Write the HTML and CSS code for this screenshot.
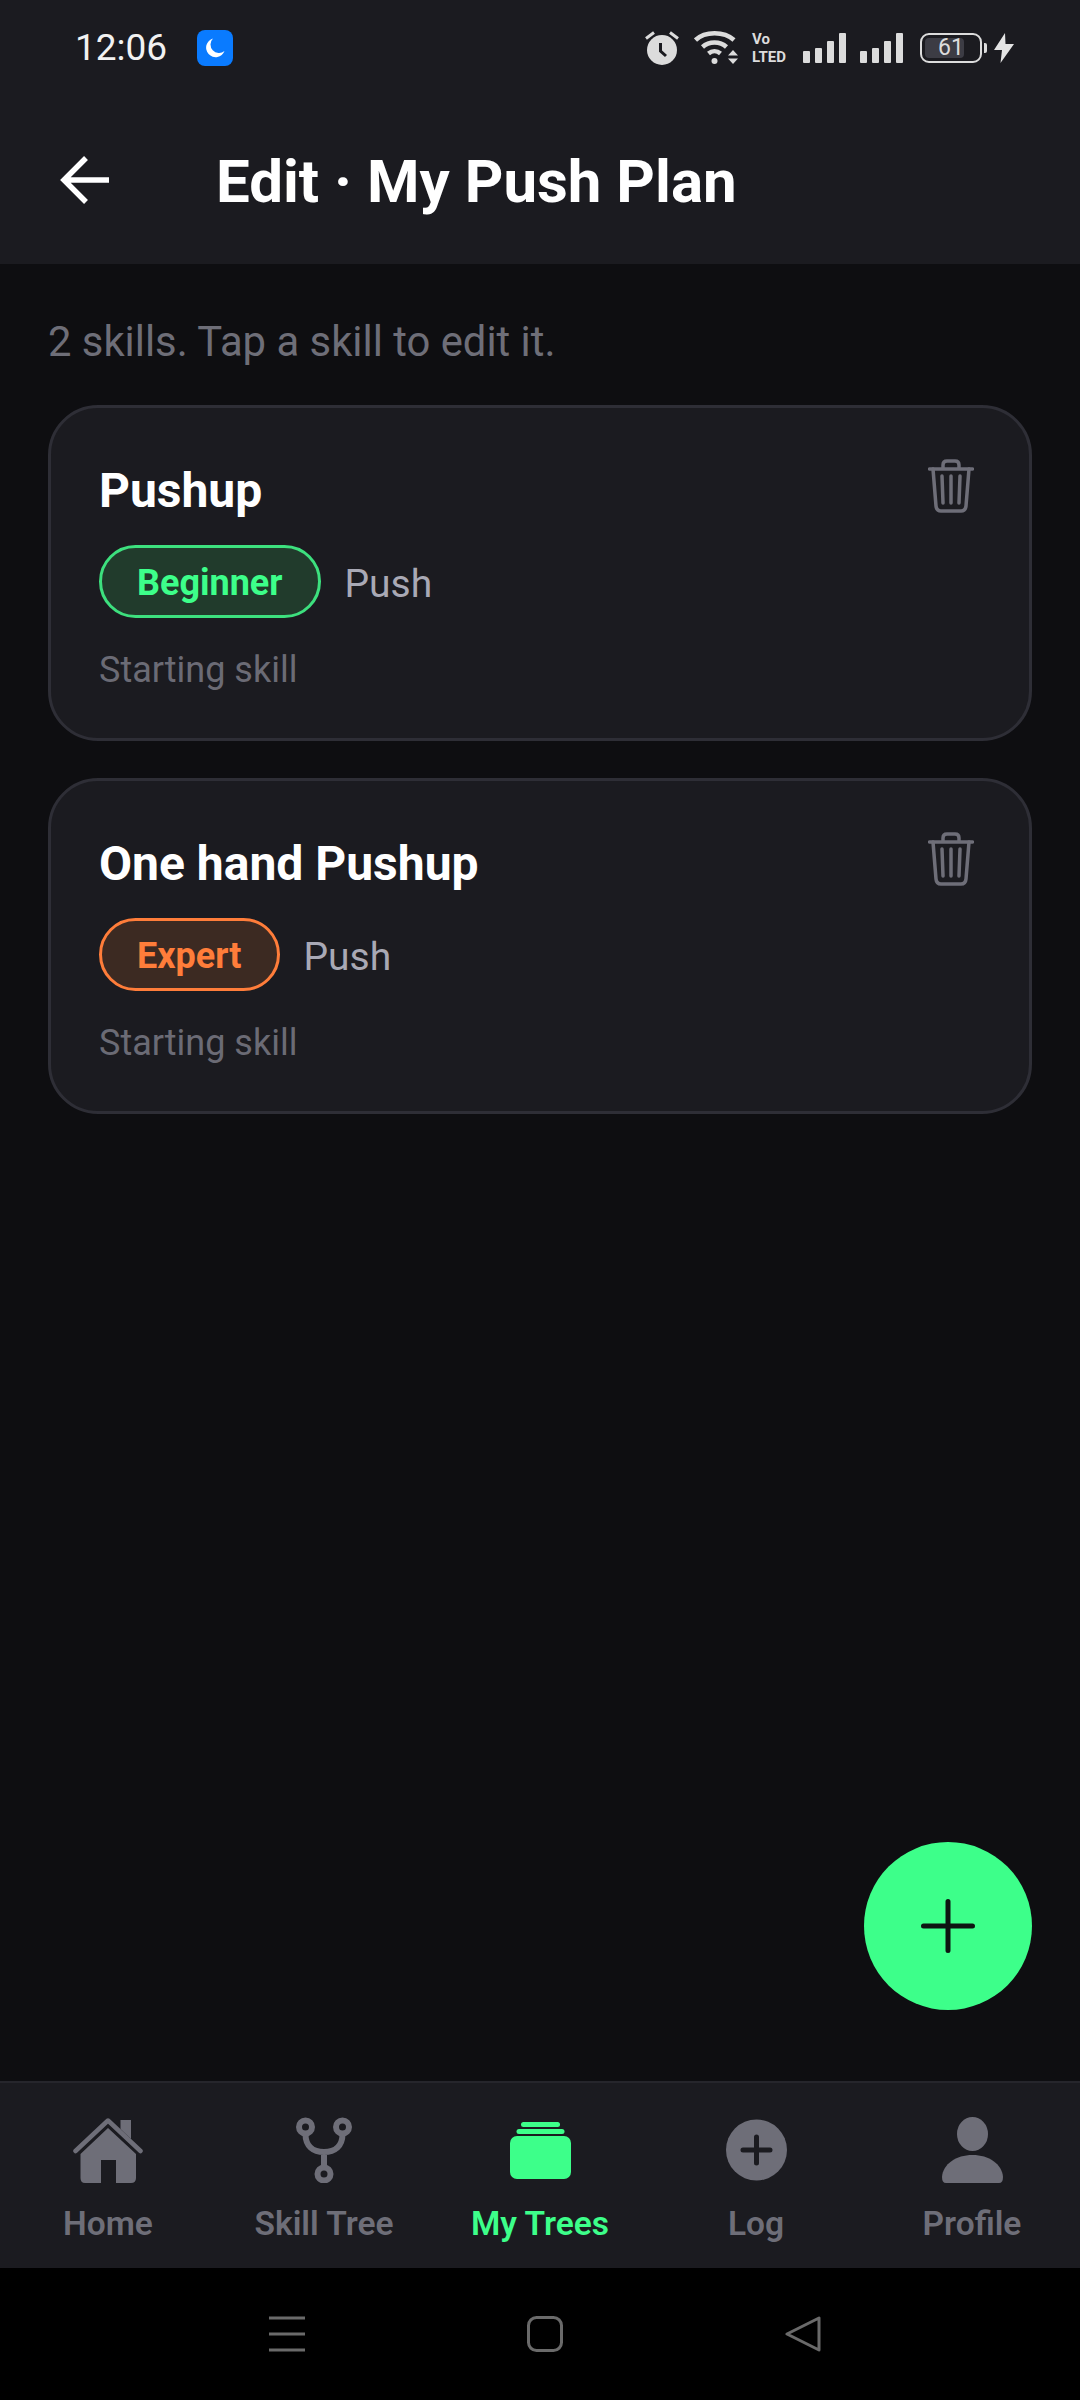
FILE: index.html
```html
<!DOCTYPE html>
<html lang="en">
<head>
    <meta charset="UTF-8">
    <meta name="viewport" content="width=device-width, initial-scale=1.0">
    <title>Edit - My Push Plan</title>
    <link rel="stylesheet" href="styles.css">
</head>
<body>
    <div class="status-bar">
        <div class="status-left">
            <span class="clock">12:06</span>
            <span class="moon-badge">
                <svg width="22" height="22" viewBox="0 0 22 22"><path d="M9 1.500A9.500 9.500 0 1 0 20.500 14 8.500 8.500 0 0 1 9 1.500Z" fill="#fff"/></svg>
            </span>
        </div>
        <div class="status-right">
            <svg class="st-alarm" width="34" height="34" viewBox="0 0 34 34" fill="#dcdcdc">
                <circle cx="17" cy="19" r="15"/>
                <path d="M1 7.500 9 1.500M33 7.500 25 1.500" stroke="#dcdcdc" stroke-width="3"/>
                <path d="M15.500 12V20L21 25" fill="none" stroke="#1b1b20" stroke-width="3"/>
            </svg>
            <svg class="st-wifi" width="45" height="34" viewBox="0 0 45 34" fill="none" stroke="#dcdcdc" stroke-width="4.500">
                <path d="M1.500 10C11 1 30 1 40 10"/>
                <path d="M8.500 17C15 11 26 11 32.500 17"/>
                <path d="M14.500 23.500C18 20.500 23 20.500 26.500 23.500"/>
                <circle cx="20.500" cy="31" r="3" fill="#dcdcdc" stroke="none"/>
                <path d="M34 25.500H44L39 20ZM34 28.500H44L39 34Z" fill="#dcdcdc" stroke="none"/>
            </svg>
            <span class="st-volte">Vo<br>LTED</span>
            <svg class="st-signal" width="43" height="30" viewBox="0 0 43 30" fill="#dcdcdc">
                <rect x="0" y="18" width="7" height="12" rx="1"/><rect x="12" y="15" width="7" height="15" rx="1"/><rect x="24" y="8" width="7" height="22" rx="1"/><rect x="36" y="0" width="7" height="30" rx="1"/>
            </svg>
            <svg class="st-signal" width="43" height="30" viewBox="0 0 43 30" fill="#dcdcdc">
                <rect x="0" y="18" width="7" height="12" rx="1"/><rect x="12" y="15" width="7" height="15" rx="1"/><rect x="24" y="8" width="7" height="22" rx="1"/><rect x="36" y="0" width="7" height="30" rx="1"/>
            </svg>
            <div class="battery">
                <div class="battery-body"><div class="battery-fill"><span>61</span></div></div>
                <div class="battery-nub"></div>
            </div>
            <svg class="st-bolt" width="20" height="30" viewBox="0 0 20 30" fill="#e4e4e4"><path d="M11 0 0 17H8L6.500 30 20 11H11.500Z"/></svg>
        </div>
    </div>

    <header class="app-header">
        <svg class="back-arrow" width="50" height="48" viewBox="0 0 50 48" fill="none" stroke="#fff" stroke-width="5.500"><path d="M49 24H4M26 2 4 24 26 46"/></svg>
        <h1 class="page-title">Edit · My Push Plan</h1>
    </header>

    <main class="content">
        <p class="hint">2 skills. Tap a skill to edit it.</p>

        <div class="skill-card">
            <div class="skill-top">
                <h2 class="skill-name">Pushup</h2>
                <svg class="trash" width="46" height="54" viewBox="0 0 46 54" fill="none" stroke="#6e6e78" stroke-width="3.500" stroke-linecap="round" stroke-linejoin="round">
                    <path d="M1.500 10H44.500M15 9V6Q15 2 19 2H27Q31 2 31 6V9"/>
                    <path d="M5 10 8 47Q8.500 52 13 52H33Q37.500 52 38 47L41 10"/>
                    <path d="M14 17 15 44M23 17V44M32 17 31 44"/>
                </svg>
            </div>
            <div class="skill-meta">
                <span class="pill pill-beginner">Beginner</span>
                <span class="skill-group">Push</span>
            </div>
            <p class="skill-note">Starting skill</p>
        </div>

        <div class="skill-card">
            <div class="skill-top">
                <h2 class="skill-name">One hand Pushup</h2>
                <svg class="trash" width="46" height="54" viewBox="0 0 46 54" fill="none" stroke="#6e6e78" stroke-width="3.500" stroke-linecap="round" stroke-linejoin="round">
                    <path d="M1.500 10H44.500M15 9V6Q15 2 19 2H27Q31 2 31 6V9"/>
                    <path d="M5 10 8 47Q8.500 52 13 52H33Q37.500 52 38 47L41 10"/>
                    <path d="M14 17 15 44M23 17V44M32 17 31 44"/>
                </svg>
            </div>
            <div class="skill-meta">
                <span class="pill pill-expert">Expert</span>
                <span class="skill-group">Push</span>
            </div>
            <p class="skill-note">Starting skill</p>
        </div>

        <button class="fab">
            <svg width="54" height="54" viewBox="0 0 54 54" stroke="#0e1512" stroke-width="5" stroke-linecap="round"><path d="M27 2.500V51.500M2.500 27H51.500"/></svg>
        </button>
    </main>

    <nav class="bottom-nav">
        <div class="nav-item">
            <svg class="nav-icon" width="70" height="66" viewBox="0 0 70 66" fill="#6e6e78">
                <path d="M2.500 34 35 3.500 67.500 34" fill="none" stroke="#6e6e78" stroke-width="4.500" stroke-linecap="round" stroke-linejoin="round"/>
                <path d="M47.500 3H58V22L47.500 12Z"/>
                <path d="M35 11 63 37V61Q63 66 58 66H43V43H28V66H12Q7.500 66 7.500 61V37Z"/>
            </svg>
            <span class="nav-label">Home</span>
        </div>
        <div class="nav-item">
            <svg class="nav-icon" width="56" height="66" viewBox="0 0 56 66" fill="none" stroke="#6e6e78" stroke-width="6">
                <circle cx="9.500" cy="10" r="6.500"/><circle cx="46.500" cy="10" r="6.500"/><circle cx="28" cy="57" r="6.500"/>
                <path d="M9.500 17C9.500 29 17 35 28 35S46.500 29 46.500 17M28 35V50"/>
            </svg>
            <span class="nav-label">Skill Tree</span>
        </div>
        <div class="nav-item nav-item-active">
            <svg class="nav-icon" width="61" height="66" viewBox="0 0 61 66" fill="#3dff8a">
                <rect x="11" y="5" width="39" height="5" rx="2.500"/>
                <rect x="6.500" y="12" width="48" height="5" rx="2.500"/>
                <rect x="0" y="19" width="61" height="43" rx="7"/>
            </svg>
            <span class="nav-label">My Trees</span>
        </div>
        <div class="nav-item">
            <svg class="nav-icon" width="61" height="66" viewBox="0 0 61 66">
                <circle cx="30.500" cy="33" r="30.500" fill="#6e6e78"/>
                <path d="M30.500 20V46M17 33H44" stroke="#1b1b20" stroke-width="5" stroke-linecap="round"/>
            </svg>
            <span class="nav-label">Log</span>
        </div>
        <div class="nav-item">
            <svg class="nav-icon" width="61" height="66" viewBox="0 0 61 66" fill="#6e6e78">
                <ellipse cx="30.500" cy="17" rx="15.500" ry="17"/>
                <path d="M0 60C1 47 14 38 30.500 38S60 47 61 60Q61 66 57 66H4Q0 66 0 60Z"/>
            </svg>
            <span class="nav-label">Profile</span>
        </div>
    </nav>

    <div class="system-nav">
        <svg width="36" height="36" viewBox="0 0 36 36" stroke="#6a6a6a" stroke-width="3"><path d="M0 2H36M0 18H36M0 34H36"/></svg>
        <svg width="36" height="36" viewBox="0 0 36 36" fill="none" stroke="#6a6a6a" stroke-width="3"><rect x="1.500" y="1.500" width="33" height="33" rx="8"/></svg>
        <svg width="36" height="36" viewBox="0 0 36 36" fill="none" stroke="#6a6a6a" stroke-width="3" stroke-linejoin="round"><path d="M34 2V34L2 18Z"/></svg>
    </div>
</body>
</html>
```

FILE: styles.css
```css
* {
    box-sizing: border-box;
}
body {
    margin: 0;
    width: 1080px;
    height: 2400px;
    display: flex;
    flex-direction: column;
    background: #0e0e11;
    font-family: Roboto, sans-serif;
    color: #fff;
    overflow: hidden;
}

/* status bar */
.status-bar {
    height: 96px;
    background: #1b1b20;
    display: flex;
    justify-content: space-between;
    padding: 30px 66px 0 75px;
}
.status-left {
    display: flex;
    align-items: flex-start;
    gap: 30px;
}
.clock {
    font-size: 37px;
    line-height: 36px;
    color: #f2f2f2;
}
.moon-badge {
    width: 36px;
    height: 36px;
    border-radius: 8px;
    background: #0a7bff;
    display: flex;
    align-items: center;
    justify-content: center;
}
.status-right {
    display: flex;
    align-items: flex-start;
    height: 36px;
}
.st-alarm {
    margin-top: 1px;
}
.st-wifi {
    margin-left: 15px;
}
.st-volte {
    width: 36px;
    margin-left: 13px;
    font-size: 15px;
    line-height: 18px;
    font-weight: 700;
    color: #dcdcdc;
}
.st-signal {
    margin: 3px 0 0 15px;
}
.st-signal + .st-signal {
    margin-left: 14px;
}
.battery {
    display: flex;
    align-items: center;
    height: 30px;
    margin: 3px 0 0 17px;
}
.battery-body {
    width: 62px;
    height: 30px;
    border: 2px solid #dcdcdc;
    border-radius: 9px;
    padding: 3px;
}
.battery-fill {
    width: 39px;
    height: 100%;
    background: #3c3c44;
    border-radius: 4px;
    position: relative;
}
.battery-fill span {
    position: absolute;
    left: 13px;
    top: 0;
    font-size: 23px;
    line-height: 20px;
    color: #dcdcdc;
}
.battery-nub {
    width: 3px;
    height: 10px;
    margin-left: 2px;
    background: #dcdcdc;
    border-radius: 0 2px 2px 0;
}
.st-bolt {
    margin: 3px 0 0 7px;
}

/* header */
.app-header {
    height: 168px;
    background: #1b1b20;
    display: flex;
    align-items: center;
    padding: 0 0 0 60px;
}
.page-title {
    margin: 3px 0 0 106px;
    font-size: 60px;
    line-height: 70px;
    font-weight: 700;
}

/* list */
.content {
    flex: 1;
    position: relative;
    padding: 0 48px;
    display: flex;
    flex-direction: column;
    gap: 37px;
}
.hint {
    margin: 54px 0 2px;
    font-size: 41.800px;
    line-height: 48px;
    color: #6e6e78;
}
.skill-card {
    height: 336px;
    background: #1b1b20;
    border: 3px solid #2e2e36;
    border-radius: 50px;
    padding: 50px 48px 0;
}
.skill-top {
    display: flex;
    justify-content: space-between;
    align-items: flex-start;
}
.skill-name {
    margin: 6px 0 0;
    font-size: 48px;
    line-height: 54px;
    font-weight: 700;
}
.trash {
    margin: 1px 7px 0 0;
}
.skill-meta {
    display: flex;
    align-items: center;
    gap: 24px;
    margin-top: 27px;
}
.pill {
    height: 73px;
    padding: 2px 35px 0;
    border-radius: 37px;
    border: 3px solid;
    display: flex;
    align-items: center;
    font-size: 36px;
    font-weight: 700;
}
.pill-beginner {
    color: #3dff8a;
    border-color: #3de07e;
    background: #213b2c;
}
.pill-expert {
    color: #ff7d3a;
    border-color: #ff7d3a;
    background: #3c2a22;
}
.skill-group {
    padding-top: 5px;
    font-size: 39px;
    color: #a9a9b5;
}
.skill-note {
    margin: 30px 0 0;
    font-size: 36px;
    line-height: 44px;
    color: #6b6b75;
}
.fab {
    position: absolute;
    right: 48px;
    bottom: 71px;
    width: 168px;
    height: 168px;
    border: none;
    border-radius: 50%;
    background: #3dff8a;
    padding: 0;
    display: flex;
    align-items: center;
    justify-content: center;
}

/* bottom nav */
.bottom-nav {
    height: 187px;
    background: #1b1b20;
    border-top: 2px solid #26262c;
    display: flex;
}
.nav-item {
    flex: 1;
    display: flex;
    flex-direction: column;
    align-items: center;
    padding-top: 34px;
}
.nav-icon {
    display: block;
}
.nav-label {
    margin-top: 21px;
    font-size: 33.500px;
    line-height: 40px;
    font-weight: 600;
    color: #6e6e78;
}
.nav-item-active .nav-label {
    color: #3dff8a;
}

/* android buttons */
.system-nav {
    height: 132px;
    background: #000;
    display: grid;
    grid-template-columns: 36px 36px 36px;
    justify-content: center;
    column-gap: 222px;
    padding: 48px 0 0 10px;
}
```
